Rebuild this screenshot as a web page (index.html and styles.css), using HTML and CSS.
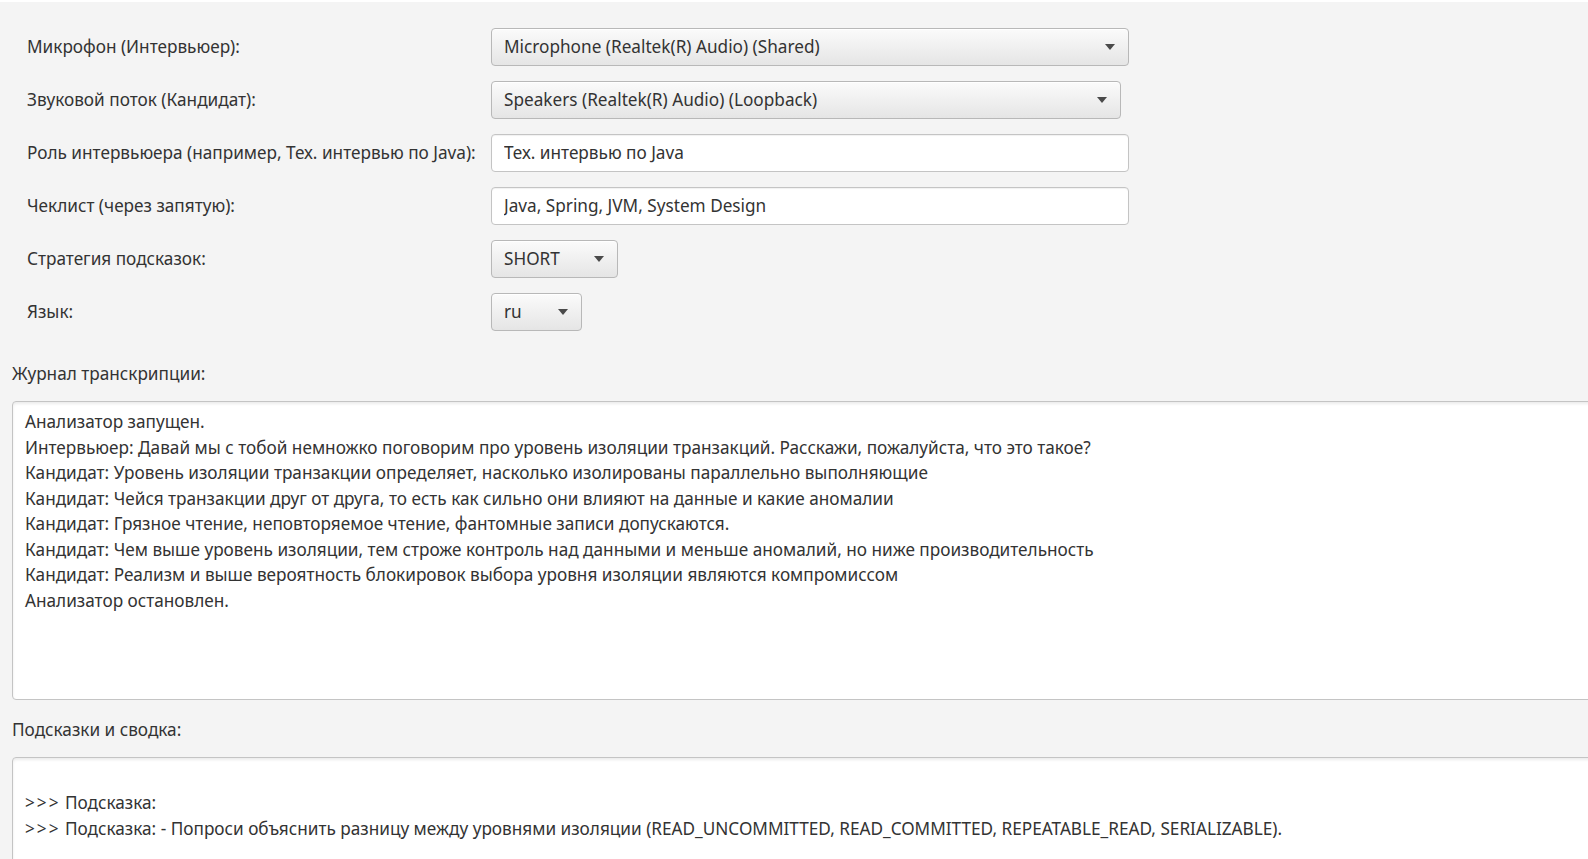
FILE: index.html
```html
<!DOCTYPE html>
<html lang="ru">
<head>
    <meta charset="UTF-8">
    <title>Анализатор интервью</title>
    <link rel="stylesheet" href="styles.css">
</head>
<body>
    <div class="settings">
        <label class="field-label">Микрофон (Интервьюер):</label>
        <div class="combo combo-wide">
            <span>Microphone (Realtek(R) Audio) (Shared)</span>
            <i class="arrow"></i>
        </div>

        <label class="field-label">Звуковой поток (Кандидат):</label>
        <div class="combo combo-speakers">
            <span>Speakers (Realtek(R) Audio) (Loopback)</span>
            <i class="arrow"></i>
        </div>

        <label class="field-label">Роль интервьюера (например, Тех. интервью по Java):</label>
        <input class="text-field" type="text" value="Тех. интервью по Java">

        <label class="field-label">Чеклист (через запятую):</label>
        <input class="text-field" type="text" value="Java, Spring, JVM, System Design">

        <label class="field-label">Стратегия подсказок:</label>
        <div class="combo combo-strategy">
            <span>SHORT</span>
            <i class="arrow"></i>
        </div>

        <label class="field-label">Язык:</label>
        <div class="combo combo-lang">
            <span>ru</span>
            <i class="arrow"></i>
        </div>
    </div>

    <!-- Transcript log -->
    <div class="log-section">
        <div class="section-title">Журнал транскрипции:</div>
        <div class="text-area transcript">Анализатор запущен.
Интервьюер: Давай мы с тобой немножко поговорим про уровень изоляции транзакций. Расскажи, пожалуйста, что это такое?
Кандидат: Уровень изоляции транзакции определяет, насколько изолированы параллельно выполняющие
Кандидат: Чейся транзакции друг от друга, то есть как сильно они влияют на данные и какие аномалии
Кандидат: Грязное чтение, неповторяемое чтение, фантомные записи допускаются.
Кандидат: Чем выше уровень изоляции, тем строже контроль над данными и меньше аномалий, но ниже производительность
Кандидат: Реализм и выше вероятность блокировок выбора уровня изоляции являются компромиссом
Анализатор остановлен.</div>
    </div>

    <!-- Hints and summary -->
    <div class="log-section">
        <div class="section-title">Подсказки и сводка:</div>
        <div class="text-area hints">
<span class="prompt">&gt;&gt;&gt;</span> Подсказка:
<span class="prompt">&gt;&gt;&gt;</span> Подсказка: - Попроси объяснить разницу между уровнями изоляции (READ_UNCOMMITTED, READ_COMMITTED, REPEATABLE_READ, SERIALIZABLE).</div>
    </div>
</body>
</html>
```

FILE: styles.css
```css
html, body {
    overflow: hidden;
}

body {
    margin: 0;
    padding: 0;
    height: 859px;
    background: #f4f4f4;
    border-top: 2px solid #ffffff;
    font-family: "Noto Sans", "Open Sans", sans-serif;
    font-size: 17.2px;
    color: #333;
}

.settings {
    display: grid;
    grid-template-columns: 464px 640px;
    grid-auto-rows: 37.5px;
    row-gap: 15.5px;
    align-items: center;
    padding: 26px 0 0 27px;
}

.field-label {
    white-space: nowrap;
}

/* ComboBox */
.combo {
    position: relative;
    box-sizing: border-box;
    height: 37.5px;
    display: flex;
    align-items: center;
    padding: 0 12px;
    border: 1px solid #b8b8b8;
    border-radius: 4px;
    background: linear-gradient(#fbfbfb, #e5e5e5);
    box-shadow: inset 0 1px 0 #ffffff;
}

.combo span {
    flex: 1;
    white-space: nowrap;
}

.arrow {
    width: 0;
    height: 0;
    border-left: 5.5px solid transparent;
    border-right: 5.5px solid transparent;
    border-top: 6px solid #4a4a4a;
    margin-right: 1px;
}

.combo-wide {
    width: 638px;
}

.combo-speakers {
    width: 630px;
}

.combo-strategy {
    width: 127px;
}

.combo-lang {
    width: 91px;
}

/* TextField */
.text-field {
    box-sizing: border-box;
    width: 638px;
    height: 37.5px;
    padding: 0 12px;
    border: 1px solid #c4c4c4;
    border-radius: 4px;
    background: #fff;
    box-shadow: inset 0 1px 1px rgba(0, 0, 0, 0.06);
    font-family: inherit;
    font-size: 17.2px;
    color: #333;
    outline: none;
}

/* Log sections */
.log-section {
    padding-left: 12px;
}

.section-title {
    height: 26px;
    line-height: 26px;
    margin-top: 30.5px;
    margin-bottom: 14px;
}

.log-section + .log-section .section-title {
    margin-top: 16.5px;
}

.text-area {
    box-sizing: border-box;
    width: 1620px;
    border: 1px solid #c4c4c4;
    border-radius: 4px;
    background: #fff;
    box-shadow: inset 0 2px 3px rgba(0, 0, 0, 0.08);
    padding: 7px 12px;
    white-space: pre;
    line-height: 25.5px;
    overflow: hidden;
}

.transcript {
    height: 299px;
}

.hints {
    height: 140px;
}

.prompt {
    letter-spacing: 2px;
}
```
